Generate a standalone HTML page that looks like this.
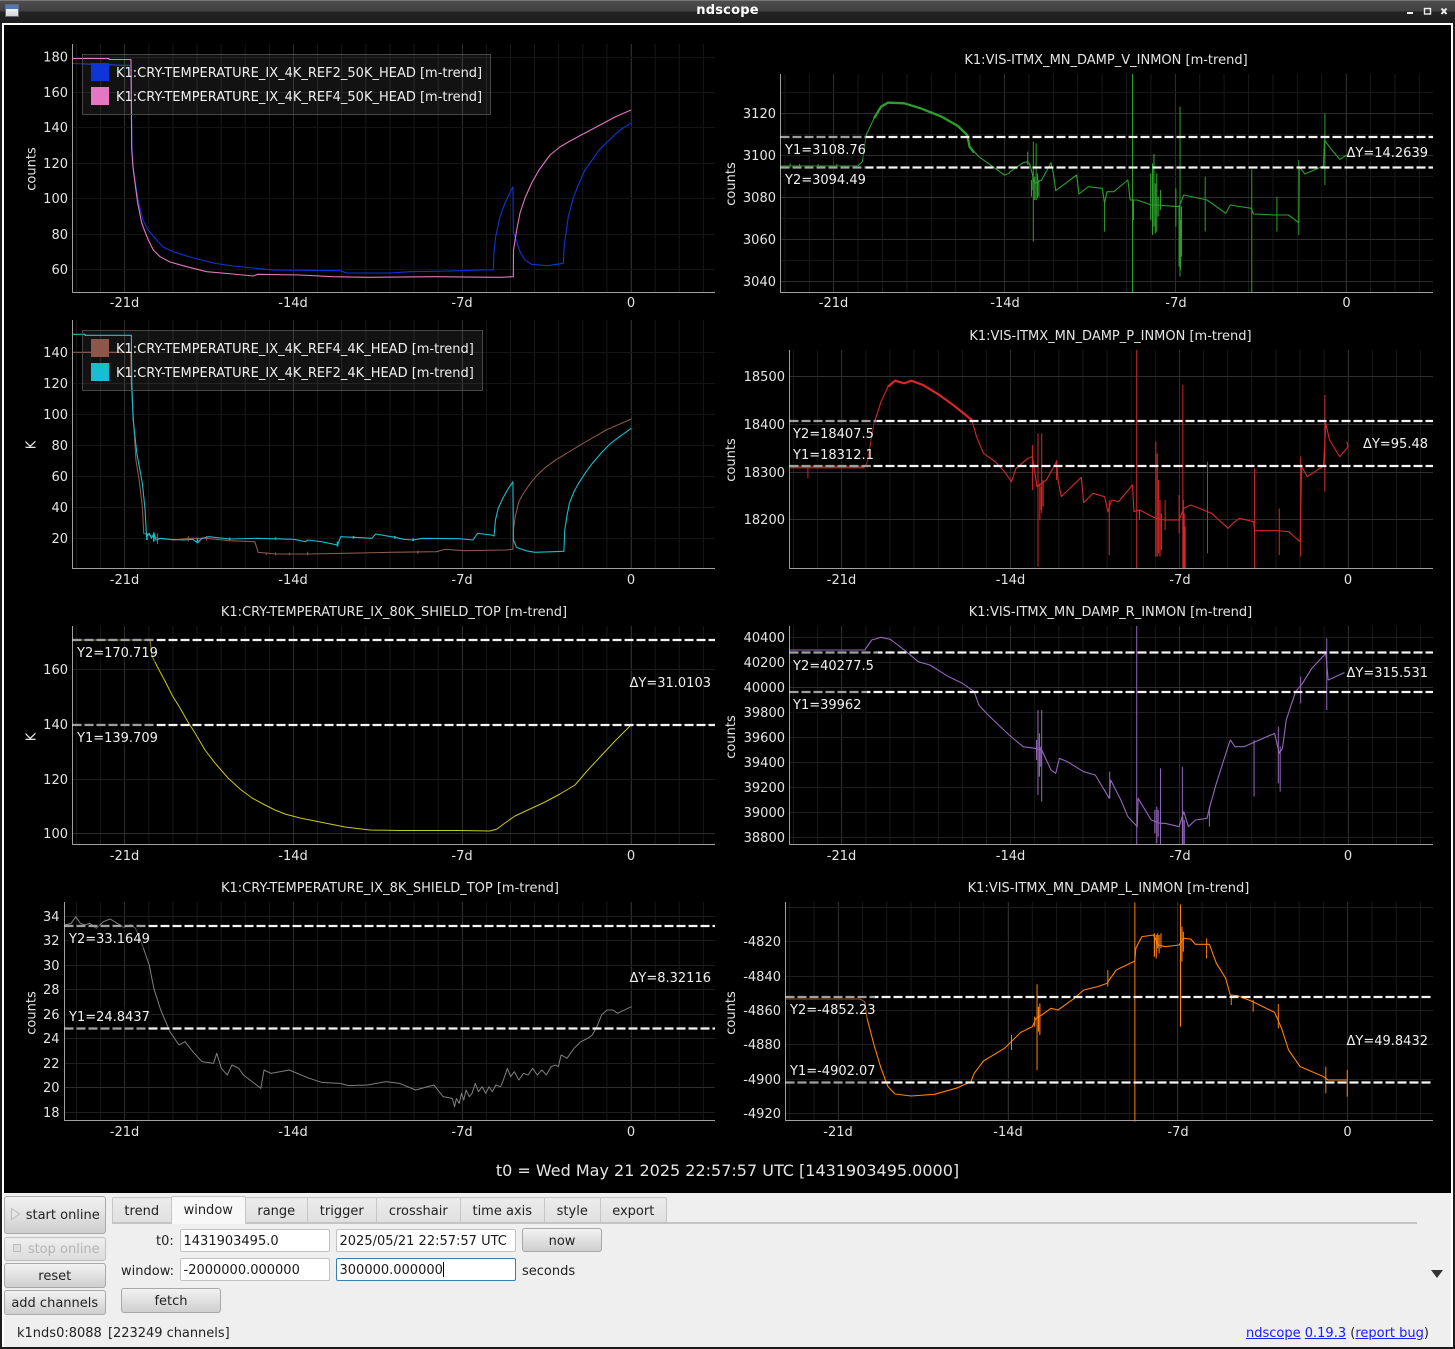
<!DOCTYPE html>
<html><head><meta charset="utf-8"><title>ndscope</title>
<style>
html,body{margin:0;padding:0;background:#1c1c1c;width:1455px;height:1349px;overflow:hidden}
body{position:relative;font:13px "DejaVu Sans","Liberation Sans",sans-serif;color:#222}
#tb{position:absolute;left:0;top:0;width:1455px;height:23px;background:linear-gradient(#4e4e4e 0,#404040 10px,#222 11px,#1e1e1e 23px);border-top:1px solid #777;box-sizing:border-box}
#ttl{position:absolute;left:0;width:1455px;top:2.5px;text-align:center;color:#fff;font-weight:bold;font-size:13px;letter-spacing:.2px}
#frame{position:absolute;left:2px;top:23px;width:1451px;height:1324px;background:#fff}
#blk{position:absolute;left:3.5px;top:24.5px;width:1447.5px;height:1168.5px;background:#000}
#pan{position:absolute;left:3.5px;top:1193px;width:1447.5px;height:153.5px;background:#efefef}
svg#s{position:absolute;left:0;top:0}
path{vector-effect:non-scaling-stroke;fill:none;stroke-linejoin:round}
text{font-family:"DejaVu Sans","Liberation Sans",sans-serif;font-size:13px;fill:#e4e4e4}
.w text,text.w{fill:#f0f0f0}
.mid{text-anchor:middle}.end{text-anchor:end}
.a{position:absolute;box-sizing:border-box;white-space:nowrap}
.btn{background:linear-gradient(#f2f2f2,#cfcfcf);border:1px solid #a8a8a8;border-radius:3px;text-align:center;color:#222}
.tab{background:linear-gradient(#ececec,#e0e0e0);border:1px solid #c6c6c6;border-bottom:none;text-align:center;top:1197px;height:25px;line-height:27px;border-radius:2px 2px 0 0}
.inp{background:#fff;border:1px solid #c2c2c2;border-radius:2px;height:23px;line-height:23.5px;padding-left:2.5px;color:#1a1a1a}
.lnk{color:#1a1aff;text-decoration:underline}
</style></head><body>
<div id="tb"></div>
<div class="a" style="left:5px;top:4px;width:14px;height:13px;background:linear-gradient(#4f78b8 0,#4f78b8 4px,#f2f2f2 4px,#c8ccd4 13px);border:1px solid #667"></div>
<div id="ttl">ndscope</div>
<div id="frame"></div><div id="blk"></div><div id="pan"></div>

<svg id="s" width="1455" height="1349" viewBox="0 0 1455 1349" xmlns="http://www.w3.org/2000/svg">
<!-- window buttons -->
<path d="M1407 13H1413" stroke="#eee" stroke-width="2"/>
<rect x="1424.5" y="8.5" width="6" height="5.5" fill="none" stroke="#eee" stroke-width="1.4"/>
<path d="M1441.5 8.5L1446.5 14M1446.5 8.5L1441.5 14" stroke="#eee" stroke-width="2"/>

<!-- vertical minor grids -->
<g fill="none" stroke="#181818">
<line x1="76" x2="715" y1="168" y2="168" stroke-width="248" stroke-dasharray="1 23.11"/>
<line x1="76" x2="715" y1="444" y2="444" stroke-width="248" stroke-dasharray="1 23.11"/>
<line x1="76" x2="715" y1="735" y2="735" stroke-width="218" stroke-dasharray="1 23.11"/>
<line x1="76" x2="715" y1="1011" y2="1011" stroke-width="218" stroke-dasharray="1 23.11"/>
<line x1="784.4" x2="1433" y1="183" y2="183" stroke-width="218" stroke-dasharray="1 23.4"/>
<line x1="793" x2="1433" y1="459" y2="459" stroke-width="218" stroke-dasharray="1 23.12"/>
<line x1="793" x2="1433" y1="735" y2="735" stroke-width="218" stroke-dasharray="1 23.12"/>
<line x1="789.2" x2="1433" y1="1011" y2="1011" stroke-width="218" stroke-dasharray="1 23.26"/>
</g>
<!-- major verticals -->
<path stroke="#2c2c2c" d="M124.5 44V292M293.5 44V292M462.5 44V292M631.5 44V292M124.5 320V568M293.5 320V568M462.5 320V568M631.5 320V568M124.5 626V844M293.5 626V844M462.5 626V844M631.5 626V844M124.5 902V1120M293.5 902V1120M462.5 902V1120M631.5 902V1120M833.5 74V292M1004.5 74V292M1175.5 74V292M1346.5 74V292M841.5 350V568M1010.5 350V568M1179.5 350V568M1348.5 350V568M841.5 626V844M1010.5 626V844M1179.5 626V844M1348.5 626V844M838.5 902V1120M1008.5 902V1120M1177.5 902V1120M1347.5 902V1120"/>
<!-- horizontal grids -->
<path stroke="#141414" d="M72 57.5H715M72 92.5H715M72 127.5H715M72 163.5H715M72 198.5H715M72 234.5H715M72 269.5H715M72 352.5H715M72 383.5H715M72 414.5H715M72 445.5H715M72 476.5H715M72 507.5H715M72 538.5H715M781 92.5H1433M781 134.5H1433M781 176.5H1433M781 218.5H1433M781 260.5H1433"/>
<path stroke="#1e1e1e" d="M72 669.5H715M72 724.5H715M72 779.5H715M64 916.5H715M64 940.5H715M64 965.5H715M64 989.5H715M64 1014.5H715M64 1038.5H715M64 1063.5H715M64 1112.5H715M790 637.5H1433M790 662.5H1433M790 712.5H1433M790 737.5H1433M790 762.5H1433M790 787.5H1433M790 812.5H1433M790 837.5H1433M786 907.5H1433M786 941.5H1433M786 976.5H1433M786 1010.5H1433M786 1044.5H1433M786 1079.5H1433M786 1113.5H1433"/>
<path stroke="#2e2e2e" d="M72 833.5H715M64 1087.5H715M781 113.5H1433M781 155.5H1433M781 197.5H1433M781 239.5H1433M781 281.5H1433M790 376.5H1433M790 424.5H1433M790 472.5H1433M790 519.5H1433M790 687.5H1433"/>

<!-- P1 traces -->
<path stroke="#0e35d8" stroke-width="1.1" d="M72.5 63.5L131 65.5L132 148L133 167L135 180L138 200L143 220L148 230L156.7 240L163 247L173 251.7L190 257L213 263L233 266L253 268L273 270L340 270.7L347 273L390 273L410 271.7L450 271L480 270L493.3 270L494 251.7L495.7 236.7L500 216.7L505 203L512.3 188L513 187L513.3 231.7L516.7 241.7L520 251.7L525 260L531.7 264.3L546.7 265.7L563.3 263.3L564.3 245L566 233L568.3 216.7L573.3 198L578.3 185L585 170L600 149L620 130L631 123"/>
<path stroke="#e377c2" stroke-width="1.1" d="M72.5 58.5L109 58.5L109 59.5L131 59.5L131.7 150L133 167L135 183L137.7 203L141.7 223L144.3 230L148.3 240L153.3 250L160 256.7L170 262L186.7 266.7L206.7 271.7L233 274L253 276L258 274.3L300 275L333 276.7L367 277.3L433 276.7L500 277.3L513.3 276.7L513.5 250L516.7 230L520 213L525 198L531.7 183L539 170L550 155L560 147L570 141L585 133L600 125L615 117L631 110"/>
<!-- P2 traces -->
<g transform="translate(0 320) scale(.45918 .33333)">
<path stroke="#8c564b" stroke-width="1.1" d="M158 97L285 97L286 190L288 240L292 330L296 420L303 480L310 560L313 640L345 655L380 660L410 655L450 655L500 662L555 665L562 697L600 702L670 702L750 700L850 697L950 695L970 688L1010 692L1100 690L1117 688L1118 630L1122 590L1130 545L1140 520L1155 490L1170 465L1190 440L1210 420L1240 395L1270 370L1295 350L1320 330L1345 315L1375 297"/>
<path stroke="#8c564b" stroke-width="1" d="M343 640V672M410 648V665M450 648V662M670 695V706M580 697V705M600 697V706M630 698V706M910 692V702"/>
<path stroke="#17becf" stroke-width="1.1" d="M158 43L185 43L185 46L286 46L287 190L290 300L298 400L310 490L316 570L319 650L325 640L330 655L335 640L340 660L350 655L370 658L400 660L420 658L430 668L440 655L455 650L500 657L560 655L640 658L665 665L670 660L700 665L735 675L742 650L770 652L810 655L818 642L860 652L880 658L900 660L920 655L1000 656L1030 660L1040 640L1070 645L1076 648L1079 600L1085 565L1095 535L1105 510L1117 485L1118 660L1125 682L1145 692L1165 697L1228 694L1230 630L1235 585L1240 550L1250 515L1260 490L1275 458L1290 430L1310 398L1330 370L1352 347L1375 325"/>
<path stroke="#17becf" stroke-width="1.6" d="M320 640V660M335 637V665M430 655V670M735 665V680M770 648V656M860 648V656M900 655V663M600 652V659M500 653V660"/>
</g>
<!-- P3 trace -->
<path stroke="#c8c81a" stroke-width="1" d="M72.5 640L150 640L152 656L158 668L165 681L172 695L180 708L188 722L195 733L205 750L215 763L228 778L240 789L252 798L265 805L275 810L285 814L300 818L320 822L345 827L370 830L400 830.5L430 830.5L460 830.5L490 831L497 829L505 823L515 816L530 809L545 802L560 794L575 785L587 771L600 757L615 741L631 725"/>
<!-- P4 trace -->
<g transform="translate(0 895) scale(.45918 .33333)">
<path stroke="#7f7f7f" stroke-width="1" d="M141 90L155 85L165 65L175 85L185 90L195 85L210 100L225 80L240 72L255 85L270 97L285 90L295 100L310 150L325 210L335 280L350 345L370 410L390 450L403 440L420 470L440 500L465 505L472 475L482 520L495 540L505 510L520 520L530 540L568 580L575 525L590 535L630 525L670 548L700 562L740 565L760 572L800 570L840 560L870 565L905 585L945 570L965 605L985 610L990 635L994 610L1000 625L1005 595L1010 615L1015 585L1022 605L1028 595L1035 565L1042 590L1050 575L1058 595L1065 575L1072 590L1080 570L1090 575L1095 560L1105 520L1112 545L1120 530L1130 555L1140 535L1150 540L1160 520L1170 540L1180 525L1190 540L1200 515L1210 510L1216 515L1222 480L1235 490L1250 460L1265 440L1280 430L1290 420L1300 395L1310 360L1322 345L1335 345L1345 355L1375 335"/>
</g>
<!-- P5 green -->
<g transform="translate(725 40) scale(.46575 .33333)" stroke="#2ca02c">
<path stroke-width="1.1" d="M119 378L285 378L295 365L303 285L320 235L335 200L350 188L385 190L420 205L465 230L500 258L520 285L525 320L545 350L575 380L600 405L610 400L612 395L640 368L650 365L655 375L665 430L680 420L700 368L705 400L710 452L755 405L760 462L780 440L810 445L815 490L820 455L835 455L865 420L870 480L885 480L915 495L925 495L975 500L985 465L1035 480L1075 520L1085 495L1130 505L1135 522L1180 525L1210 525L1232 548L1233 380L1245 402L1285 378L1287 300L1300 325L1320 358L1335 345"/>
<path stroke-width="2.3" d="M320 235L335 200L350 188L385 190L420 205L465 230L500 258L520 285L525 320L535 338"/>
<path stroke-width="1" d="M662 305V605M668 310V480M875 102V757M935 450V510M968 445V560M977 200V710M1031 410V575M1131 388V757M1185 470V575M1232 360V585M1288 220V435M877 480V540M815 490V575M650 335V375M140 370V385M160 372V386M200 372V385M240 372V385"/>
<path stroke-width="1.1" d="M658 420V470M661 400V450M665 410V480M671 400V475M674 420V470M914 400V540M918 370V585M921 342V560M924 430V580M927 400V575M930 470V530M975 495V680M978 540V690M980 500V650"/>
</g>
<!-- P6 red -->
<g transform="translate(725 340) scale(.46575 .33333)" stroke="#d62728">
<path stroke-width="1.1" d="M140 378L300 378L305 370L320 250L335 185L350 140L365 120L385 130L400 122L425 135L460 165L490 195L530 240L540 290L555 340L580 365L600 395L615 425L625 385L650 355L660 350L670 440L690 420L712 365L715 420L722 470L765 412L770 488L790 460L815 470L822 515L830 480L845 485L875 435L878 515L890 510L925 535L945 540L975 540L985 505L1000 495L1045 520L1080 565L1090 550L1105 535L1135 545L1137 572L1185 572L1210 575L1235 605L1238 380L1250 410L1285 378L1290 250L1298 300L1320 350L1338 320L1335 305"/>
<path stroke-width="2.2" d="M140 382H300M350 140L365 122L385 130L400 122L425 135L460 165L490 195L530 240"/>
<path stroke-width="1" d="M672 280V680M680 280V520M660 315V450M712 360V420M825 480V645M884 30V685M925 305V650M945 480V570M983 135V685M975 465V580M1036 365V640M1137 385V685M1190 505V645M1236 350V650M1288 165V455M178 378V415M890 510V540"/>
<path stroke-width="1.1" d="M676 430V540M679 440V510M683 420V500M928 340V650M931 420V640M934 480V650M937 520V630M984 480V685M986 520V685M988 560V685"/>
</g>
<!-- P7 purple -->
<g transform="translate(725 620) scale(.46575 .33333)" stroke="#9467bd">
<path stroke-width="1.1" d="M139 90L300 90L315 60L335 52L355 58L385 90L415 125L440 135L480 170L510 190L535 215L545 255L565 285L610 345L640 380L665 385L680 390L700 450L710 460L718 415L735 425L770 455L795 465L825 535L828 480L850 540L865 590L885 620L887 535L900 565L915 600L935 610L945 610L975 620L985 575L995 620L1010 600L1035 595L1040 565L1055 490L1080 380L1085 360L1095 380L1115 380L1180 340L1190 400L1197 385L1205 300L1225 215L1240 190L1260 145L1290 100L1295 180L1330 158"/>
<path stroke-width="1" d="M884 18V672M672 270V525M680 270V545M826 455V535M935 445V672M982 440V672M1136 360V530M1188 320V490M1192 380V515M1236 170V250M1292 55V270M1040 560V620"/>
<path stroke-width="1.1" d="M669 360V420M675 340V470M678 380V440M923 570V640M927 560V670M930 570V650M983 590V672M986 600V672"/>
</g>
<!-- P8 orange -->
<g transform="translate(725 895) scale(.46575 .33333)" stroke="#ff7f0e">
<path stroke-width="1.1" d="M130 312L290 312L300 320L305 370L320 450L335 520L350 575L365 597L400 603L450 598L500 578L528 560L535 535L555 498L600 460L635 412L660 395L668 370L680 360L700 340L715 345L750 310L770 285L800 275L820 265L840 225L880 198L882 160L895 125L920 120L930 150L945 155L975 150L985 130L1000 132L1010 148L1040 148L1055 205L1075 250L1085 300L1100 302L1130 318L1180 352L1195 400L1210 465L1235 515L1285 545L1295 555L1335 555"/>
<path stroke-width="1" d="M880 22V680M670 268V525M978 28V370M1034 130V190M1087 300V330M1188 327V400M1134 315V350M1290 515V595M1336 525V605M615 420V465M822 225V275"/>
<path stroke-width="1.1" d="M665 365V395M673 335V410M676 325V420M922 115V185M926 120V190M929 115V160M932 120V175M936 115V160M978 100V395M981 95V200M984 110V170"/>
</g>

<!-- axes -->
<path stroke="#a0a0a0" d="M72.5 44V292.5H715M72.5 320V568.5H715M72.5 626V844.5H715M64.5 902V1120.5H715M780.5 74V292.5H1433M789.5 350V568.5H1433M789.5 626V844.5H1433M785.5 902V1120.5H1433"/>

<!-- cursors -->
<path stroke="#f4f4f4" stroke-width="2.3" stroke-dasharray="9 3" d="M72.5 640H715M72.5 725H715M64.5 926H715M64.5 1028.5H715M780.5 137H1433M780.5 167.5H1433M789.5 421H1433M789.5 466H1433M789.5 652.5H1433M789.5 692H1433M785.5 997H1433M785.5 1082.5H1433"/>
<!-- dimming label boxes -->
<g fill="#000" fill-opacity=".35">
<rect x="73" y="639" width="84" height="23"/><rect x="73" y="724" width="84" height="23"/>
<rect x="65" y="925" width="82" height="23"/><rect x="65" y="1006" width="82" height="23.5"/>
<rect x="781" y="135.5" width="85" height="23"/><rect x="781" y="166" width="85" height="23"/>
<rect x="790" y="419.5" width="87" height="23"/><rect x="790" y="444" width="80" height="23.5"/>
<rect x="790" y="651" width="88" height="23"/><rect x="790" y="690.5" width="77" height="23"/>
<rect x="786" y="995.5" width="89" height="23"/><rect x="786" y="1060" width="89" height="24"/>
</g>
<!-- cursor labels -->
<g class="w">
<text x="77" y="657">Y2=170.719</text><text x="77" y="742">Y1=139.709</text><text x="711" y="687" class="end">ΔY=31.0103</text>
<text x="69" y="943">Y2=33.1649</text><text x="69" y="1021">Y1=24.8437</text><text x="711" y="982" class="end">ΔY=8.32116</text>
<text x="785" y="154">Y1=3108.76</text><text x="785" y="184">Y2=3094.49</text><text x="1428" y="157" class="end">ΔY=14.2639</text>
<text x="793" y="438">Y2=18407.5</text><text x="793" y="459">Y1=18312.1</text><text x="1428" y="448" class="end">ΔY=95.48</text>
<text x="793" y="670">Y2=40277.5</text><text x="793" y="709">Y1=39962</text><text x="1428" y="677" class="end">ΔY=315.531</text>
<text x="790" y="1014">Y2=-4852.23</text><text x="790" y="1075">Y1=-4902.07</text><text x="1428" y="1045" class="end">ΔY=49.8432</text>
</g>

<!-- legends -->
<rect x="82.5" y="54.5" width="408" height="60" fill="#fff" fill-opacity=".07" stroke="#555" stroke-opacity=".8"/>
<rect x="91" y="63" width="18" height="18" fill="#0e35d8"/><rect x="91" y="87" width="18" height="18" fill="#e377c2"/>
<text x="116" y="77" class="w">K1:CRY-TEMPERATURE_IX_4K_REF2_50K_HEAD [m-trend]</text>
<text x="116" y="101" class="w">K1:CRY-TEMPERATURE_IX_4K_REF4_50K_HEAD [m-trend]</text>
<rect x="82.5" y="330.5" width="400" height="60" fill="#fff" fill-opacity=".07" stroke="#555" stroke-opacity=".8"/>
<rect x="91" y="339" width="18" height="18" fill="#8c564b"/><rect x="91" y="363" width="18" height="18" fill="#17becf"/>
<text x="116" y="353" class="w">K1:CRY-TEMPERATURE_IX_4K_REF4_4K_HEAD [m-trend]</text>
<text x="116" y="377" class="w">K1:CRY-TEMPERATURE_IX_4K_REF2_4K_HEAD [m-trend]</text>

<!-- titles -->
<g class="mid">
<text class="mid" x="394" y="616">K1:CRY-TEMPERATURE_IX_80K_SHIELD_TOP [m-trend]</text>
<text class="mid" x="390" y="892">K1:CRY-TEMPERATURE_IX_8K_SHIELD_TOP [m-trend]</text>
<text class="mid" x="1106" y="64">K1:VIS-ITMX_MN_DAMP_V_INMON [m-trend]</text>
<text class="mid" x="1110.5" y="340">K1:VIS-ITMX_MN_DAMP_P_INMON [m-trend]</text>
<text class="mid" x="1110.5" y="616">K1:VIS-ITMX_MN_DAMP_R_INMON [m-trend]</text>
<text class="mid" x="1108.5" y="892">K1:VIS-ITMX_MN_DAMP_L_INMON [m-trend]</text>
</g>

<!-- y tick labels -->
<g class="end">
<text class="end" x="68" y="61.5">180</text><text class="end" x="68" y="97">160</text><text class="end" x="68" y="132">140</text><text class="end" x="68" y="168">120</text><text class="end" x="68" y="203">100</text><text class="end" x="68" y="239">80</text><text class="end" x="68" y="274">60</text>
<text class="end" x="68" y="357">140</text><text class="end" x="68" y="388">120</text><text class="end" x="68" y="419">100</text><text class="end" x="68" y="450">80</text><text class="end" x="68" y="481">60</text><text class="end" x="68" y="512">40</text><text class="end" x="68" y="543">20</text>
<text class="end" x="68" y="674">160</text><text class="end" x="68" y="729">140</text><text class="end" x="68" y="784">120</text><text class="end" x="68" y="838">100</text>
<text class="end" x="59.5" y="921">34</text><text class="end" x="59.5" y="945">32</text><text class="end" x="59.5" y="970">30</text><text class="end" x="59.5" y="994">28</text><text class="end" x="59.5" y="1019">26</text><text class="end" x="59.5" y="1043">24</text><text class="end" x="59.5" y="1068">22</text><text class="end" x="59.5" y="1092">20</text><text class="end" x="59.5" y="1117">18</text>
<text class="end" x="776" y="118">3120</text><text class="end" x="776" y="160">3100</text><text class="end" x="776" y="202">3080</text><text class="end" x="776" y="244">3060</text><text class="end" x="776" y="286">3040</text>
<text class="end" x="785" y="381">18500</text><text class="end" x="785" y="429">18400</text><text class="end" x="785" y="477">18300</text><text class="end" x="785" y="524">18200</text>
<text class="end" x="785" y="642">40400</text><text class="end" x="785" y="667">40200</text><text class="end" x="785" y="692">40000</text><text class="end" x="785" y="717">39800</text><text class="end" x="785" y="742">39600</text><text class="end" x="785" y="767">39400</text><text class="end" x="785" y="792">39200</text><text class="end" x="785" y="817">39000</text><text class="end" x="785" y="842">38800</text>
<text class="end" x="781" y="946">-4820</text><text class="end" x="781" y="981">-4840</text><text class="end" x="781" y="1015">-4860</text><text class="end" x="781" y="1049">-4880</text><text class="end" x="781" y="1084">-4900</text><text class="end" x="781" y="1118">-4920</text>
</g>

<!-- x tick labels -->
<text class="mid" x="124.5" y="307">-21d</text><text class="mid" x="293" y="307">-14d</text><text class="mid" x="462" y="307">-7d</text><text class="mid" x="631" y="307">0</text>
<text class="mid" x="124.5" y="584">-21d</text><text class="mid" x="293" y="584">-14d</text><text class="mid" x="462" y="584">-7d</text><text class="mid" x="631" y="584">0</text>
<text class="mid" x="124.5" y="860">-21d</text><text class="mid" x="293" y="860">-14d</text><text class="mid" x="462" y="860">-7d</text><text class="mid" x="631" y="860">0</text>
<text class="mid" x="124.5" y="1136">-21d</text><text class="mid" x="293" y="1136">-14d</text><text class="mid" x="462" y="1136">-7d</text><text class="mid" x="631" y="1136">0</text>
<text class="mid" x="833.5" y="307">-21d</text><text class="mid" x="1005" y="307">-14d</text><text class="mid" x="1176" y="307">-7d</text><text class="mid" x="1346.5" y="307">0</text>
<text class="mid" x="841.5" y="584">-21d</text><text class="mid" x="1010.5" y="584">-14d</text><text class="mid" x="1180" y="584">-7d</text><text class="mid" x="1348" y="584">0</text>
<text class="mid" x="841.5" y="860">-21d</text><text class="mid" x="1010.5" y="860">-14d</text><text class="mid" x="1180" y="860">-7d</text><text class="mid" x="1348" y="860">0</text>
<text class="mid" x="838" y="1136">-21d</text><text class="mid" x="1008" y="1136">-14d</text><text class="mid" x="1178" y="1136">-7d</text><text class="mid" x="1347.5" y="1136">0</text>

<!-- axis labels -->
<text class="mid" transform="translate(35.5 169) rotate(-90)">counts</text>
<text class="mid" transform="translate(35.5 445) rotate(-90)">K</text>
<text class="mid" transform="translate(35.5 737) rotate(-90)">K</text>
<text class="mid" transform="translate(35.5 1013) rotate(-90)">counts</text>
<text class="mid" transform="translate(735 184) rotate(-90)">counts</text>
<text class="mid" transform="translate(735 460) rotate(-90)">counts</text>
<text class="mid" transform="translate(735 737) rotate(-90)">counts</text>
<text class="mid" transform="translate(735 1013) rotate(-90)">counts</text>

<text class="mid" x="727.5" y="1176" style="font-size:16px" fill="#f0f0f0">t0 = Wed May 21 2025 22:57:57 UTC [1431903495.0000]</text>
</svg>

<!-- control panel -->
<div class="a btn" style="left:4px;top:1195.5px;width:101.5px;height:38px;line-height:37px;padding-left:16px;font-size:13px;border-color:#aaa">start online</div>
<svg class="a" style="left:10px;top:1207px" width="12" height="14"><polygon points="1.5,1.5 9.5,7 1.5,12.5" fill="#e6e6e6" stroke="#bdbdbd"/></svg>
<div class="a btn" style="left:4px;top:1236.5px;width:101.5px;height:24px;line-height:23px;padding-left:18px;color:#b4b4b4;background:linear-gradient(#efefef,#dcdcdc);border-color:#c0c0c0">stop online</div>
<div class="a" style="left:12.5px;top:1244px;width:8px;height:8px;background:#dedede;border:1px solid #bcbcbc"></div>
<div class="a btn" style="left:4px;top:1263px;width:101.5px;height:25px;line-height:25px">reset</div>
<div class="a btn" style="left:4px;top:1290px;width:101.5px;height:25px;line-height:25px">add channels</div>

<div class="a" style="left:112px;top:1222px;width:1305px;height:1.5px;background:#c4c4c4"></div>
<div class="a tab" style="left:112px;width:59.5px">trend</div>
<div class="a tab" style="left:171px;width:74.5px;top:1195.5px;height:28px;line-height:28px;background:#f8f8f8">window</div>
<div class="a tab" style="left:245px;width:62.5px">range</div>
<div class="a tab" style="left:307px;width:69.5px">trigger</div>
<div class="a tab" style="left:376px;width:84.5px">crosshair</div>
<div class="a tab" style="left:460px;width:84.5px">time axis</div>
<div class="a tab" style="left:544px;width:56.5px">style</div>
<div class="a tab" style="left:600px;width:66.5px">export</div>

<div class="a" style="left:156px;top:1234px">t0:</div>
<div class="a inp" style="left:180px;top:1228.5px;width:150px">1431903495.0</div>
<div class="a inp" style="left:336px;top:1228.5px;width:180px">2025/05/21 22:57:57 UTC</div>
<div class="a btn" style="left:522px;top:1228px;width:80px;height:24px;line-height:25px">now</div>
<div class="a" style="left:121px;top:1264px">window:</div>
<div class="a inp" style="left:180px;top:1258px;width:150px">-2000000.000000</div>
<div class="a inp" style="left:336px;top:1258px;width:180px;border-color:#3a7fb0">300000.000000<span style="display:inline-block;width:1px;height:15px;background:#000;vertical-align:-3px"></span></div>
<div class="a" style="left:522px;top:1264px">seconds</div>
<div class="a btn" style="left:121px;top:1288px;width:100px;height:25px;line-height:25px">fetch</div>
<svg class="a" style="left:1430px;top:1269px" width="14" height="10"><polygon points="1,1 13,1 7,9" fill="#333"/></svg>
<div class="a" style="left:17px;top:1326px">k1nds0:8088</div>
<div class="a" style="left:108px;top:1326px;letter-spacing:-.03px">[223249 channels]</div>
<div class="a" style="right:26px;top:1326px"><span class="lnk">ndscope</span> <span class="lnk">0.19.3</span> (<span class="lnk">report bug</span>)</div>
</body></html>
